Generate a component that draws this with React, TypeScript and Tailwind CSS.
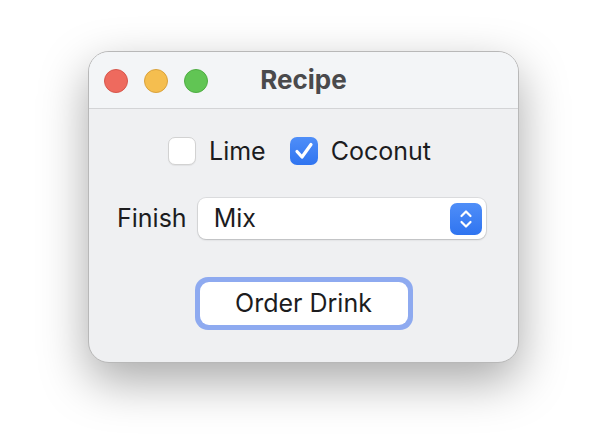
import React, { useState } from 'react';

const font = { fontFamily: 'Inter, "Noto Sans", sans-serif' };

const Checkbox: React.FC<{ checked: boolean; onToggle: () => void; label: string }> = ({ checked, onToggle, label }) => (
  <button onClick={onToggle} className="flex items-center gap-[13px]">
    {checked ? (
      <span className="w-[28px] h-[28px] rounded-[7px] bg-gradient-to-b from-[#4f8ef8] to-[#2f74f0] flex items-center justify-center">
        <svg width="24" height="24" viewBox="0 0 24 24">
          <path d="M5 12.5 L10 18 L19 5.5" fill="none" stroke="white" strokeWidth="3.2" strokeLinecap="round" strokeLinejoin="round" />
        </svg>
      </span>
    ) : (
      <span className="w-[28px] h-[28px] rounded-[7px] bg-white border border-[#d2d2d2] shadow-[0_1px_1px_rgba(0,0,0,0.06)]" />
    )}
    <span className="text-[25px] text-[#1c1c1e] leading-none">{label}</span>
  </button>
);

export default function App() {
  const [lime, setLime] = useState(false);
  const [coconut, setCoconut] = useState(true);

  return (
    <div className="w-[606px] h-[436px] bg-white pl-[88px] pt-[51px]" style={font}>
      <div className="w-[431px] h-[312px] rounded-[21px] border border-[#b8b8b8] bg-[#eff0f2] shadow-[0_18px_48px_rgba(0,0,0,0.34)] overflow-hidden flex flex-col">
        <div className="h-[57px] shrink-0 bg-[#f3f5f7] border-b border-[#d3d4d6] grid grid-cols-[1fr_auto_1fr] items-center">
          <div className="flex items-center gap-[16px] pl-[15px] pt-[1px]">
            <span className="w-[24px] h-[24px] rounded-full bg-[#ee6a5e] border border-[#d6574c]" />
            <span className="w-[24px] h-[24px] rounded-full bg-[#f5be4f] border border-[#d9a23c]" />
            <span className="w-[24px] h-[24px] rounded-full bg-[#61c554] border border-[#4fad43]" />
          </div>
          <div className="text-[26px] font-bold text-[#4a4a4c] leading-none">Recipe</div>
          <div />
        </div>

        <div className="flex flex-col">
          <div className="flex items-center gap-[24px] mt-[28px] ml-[79px]">
            <Checkbox checked={lime} onToggle={() => setLime(!lime)} label="Lime" />
            <Checkbox checked={coconut} onToggle={() => setCoconut(!coconut)} label="Coconut" />
          </div>

          <div className="flex items-center gap-[11px] mt-[33px] ml-[28px]">
            <span className="text-[25px] text-[#1c1c1e] leading-none">Finish</span>
            <div className="w-[288px] h-[41px] rounded-[8px] bg-white shadow-[0_0_0_1px_rgba(0,0,0,0.08),0_1px_2px_rgba(0,0,0,0.15)] flex items-center justify-between pl-[16px] pr-[4px]">
              <span className="text-[25px] text-[#1c1c1e] leading-none">Mix</span>
              <span className="w-[32px] h-[32px] rounded-[7px] bg-gradient-to-b from-[#4f8ef8] to-[#2f74f0] flex items-center justify-center">
                <svg width="16" height="22" viewBox="0 0 16 22">
                  <path d="M3.5 8 L8 3.5 L12.5 8" fill="none" stroke="white" strokeWidth="2.2" strokeLinecap="round" strokeLinejoin="round" />
                  <path d="M3.5 14 L8 18.5 L12.5 14" fill="none" stroke="white" strokeWidth="2.2" strokeLinecap="round" strokeLinejoin="round" />
                </svg>
              </span>
            </div>
          </div>

          <button className="mt-[38px] self-center w-[218px] h-[53px] rounded-[13px] bg-[#8eaaf0] p-[5px]">
            <span className="w-full h-full rounded-[9px] bg-white flex items-center justify-center text-[25px] text-[#1c1c1e] leading-none">
              Order Drink
            </span>
          </button>
        </div>
      </div>
    </div>
  );
}
